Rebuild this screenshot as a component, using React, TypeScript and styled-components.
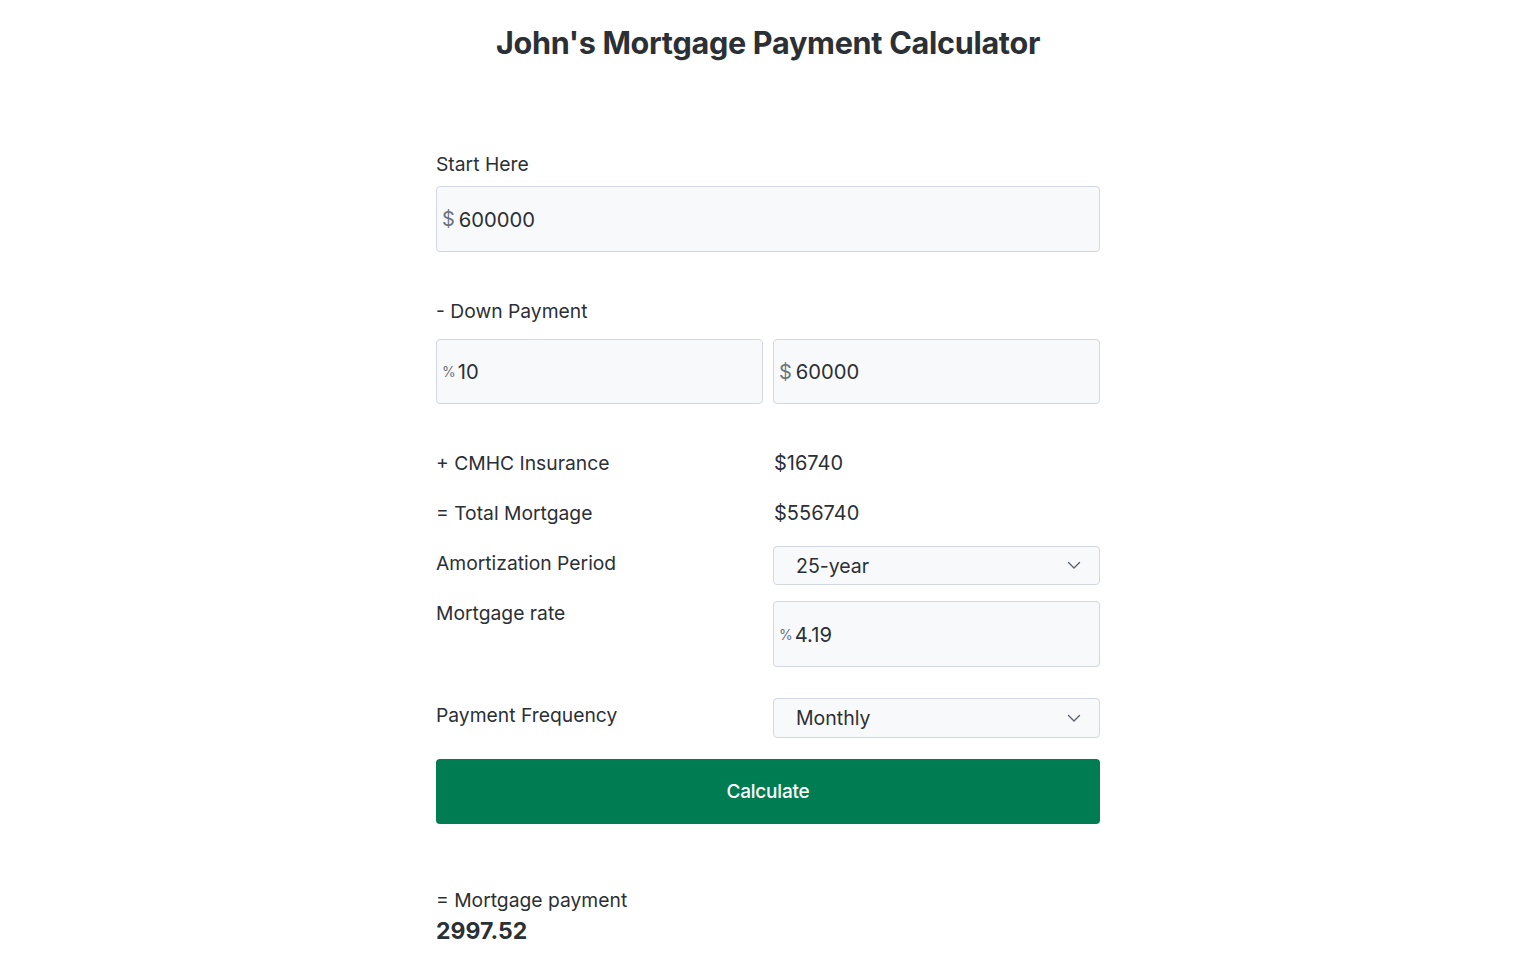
import React from "react";
import styled, { createGlobalStyle } from "styled-components";

const Global = createGlobalStyle`
  html, body { margin: 0; padding: 0; background: #ffffff; }
  body { font-family: Inter, "Noto Sans", "Liberation Sans", sans-serif; color: #2b3035; }
  * { box-sizing: border-box; }
`;

const Page = styled.div`
  display: flex;
  flex-direction: column;
  align-items: center;
  padding-top: 24px;
`;

const Title = styled.h1`
  margin: 0;
  font-size: 30.6px;
  font-weight: 700;
  letter-spacing: -0.3px;
  color: #2b3035;
  line-height: 38px;
`;

const Form = styled.div`
  width: 664px;
  margin-top: 90px;
  display: flex;
  flex-direction: column;
`;

const Label = styled.div<{ $mt?: number }>`
  font-size: 19.3px;
  line-height: 24px;
  color: #2b3035;
  margin-top: ${(p) => p.$mt ?? 0}px;
`;

const InputBox = styled.div<{ $h?: number }>`
  display: flex;
  align-items: center;
  height: ${(p) => p.$h ?? 66}px;
  border: 1px solid #d3d7e1;
  border-radius: 4px;
  background: #f8f9fa;
  padding-left: 5px;
  flex: 1;
`;

const Prefix = styled.span<{ $small?: boolean }>`
  color: #6c737c;
  font-size: ${(p) => (p.$small ? 14 : 20)}px;
  margin-right: ${(p) => (p.$small ? 2 : 4)}px;
`;

const Value = styled.span`
  font-size: 20.2px;
  color: #2b3035;
`;

const Pair = styled.div<{ $mt: number }>`
  display: flex;
  gap: 10px;
  margin-top: ${(p) => p.$mt}px;
`;

const Row = styled.div<{ $mt?: number }>`
  display: grid;
  grid-template-columns: 337px 327px;
  align-items: start;
  margin-top: ${(p) => p.$mt ?? 0}px;
`;

const Amount = styled.div`
  font-size: 20px;
  line-height: 24px;
  color: #2b3035;
  padding-left: 1px;
`;

const Select = styled.div<{ $h: number }>`
  display: flex;
  align-items: center;
  justify-content: space-between;
  height: ${(p) => p.$h}px;
  border: 1px solid #d3d7e1;
  border-radius: 4px;
  background: #f8f9fa;
  padding: 0 18px 0 22px;
  font-size: 19.5px;
  color: #2b3035;
`;

const Button = styled.button`
  margin-top: 21px;
  height: 65px;
  width: 100%;
  border: none;
  border-radius: 4px;
  background: #007c52;
  color: #ffffff;
  font-family: inherit;
  font-size: 19px;
  font-weight: 500;
  letter-spacing: -0.2px;
`;

const Result = styled.div`
  margin-top: 64px;
  display: flex;
  flex-direction: column;
`;

const Big = styled.div`
  font-size: 23px;
  font-weight: 700;
  line-height: 30px;
  margin-top: 4px;
  color: #2b3035;
`;

const Chevron = () => (
  <svg width="14" height="9" viewBox="0 0 14 9" fill="none">
    <path d="M1.5 1.5 L7 7 L12.5 1.5" stroke="#5c6370" strokeWidth="1.4" strokeLinecap="round" strokeLinejoin="round" />
  </svg>
);

export default function App() {
  return (
    <>
      <Global />
      <Page>
        <Title>John's Mortgage Payment Calculator</Title>
        <Form>
          <Label>Start Here</Label>
          <Pair $mt={10}>
            <InputBox>
              <Prefix>$</Prefix>
              <Value>600000</Value>
            </InputBox>
          </Pair>
          <Label $mt={47}>- Down Payment</Label>
          <Pair $mt={16}>
            <InputBox $h={65}>
              <Prefix $small>%</Prefix>
              <Value>10</Value>
            </InputBox>
            <InputBox $h={65}>
              <Prefix>$</Prefix>
              <Value>60000</Value>
            </InputBox>
          </Pair>
          <Row $mt={47}>
            <Label>+ CMHC Insurance</Label>
            <Amount>$16740</Amount>
          </Row>
          <Row $mt={26}>
            <Label>= Total Mortgage</Label>
            <Amount>$556740</Amount>
          </Row>
          <Row $mt={21}>
            <Label $mt={5}>Amortization Period</Label>
            <Select $h={39}>
              25-year
              <Chevron />
            </Select>
          </Row>
          <Row $mt={16}>
            <Label>Mortgage rate</Label>
            <InputBox $h={66}>
              <Prefix $small>%</Prefix>
              <Value>4.19</Value>
            </InputBox>
          </Row>
          <Row $mt={31}>
            <Label $mt={5}>Payment Frequency</Label>
            <Select $h={40}>
              Monthly
              <Chevron />
            </Select>
          </Row>
          <Button>Calculate</Button>
          <Result>
            <Label>= Mortgage payment</Label>
            <Big>2997.52</Big>
          </Result>
        </Form>
      </Page>
    </>
  );
}
